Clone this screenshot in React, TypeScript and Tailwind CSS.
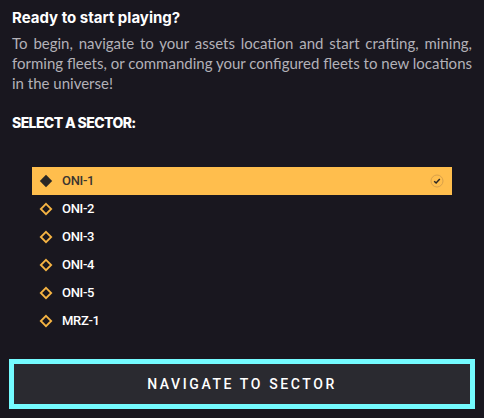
import React from 'react'

const sectors = ['ONI-1', 'ONI-2', 'ONI-3', 'ONI-4', 'ONI-5', 'MRZ-1']

const Diamond = ({ filled }: { filled: boolean }) => (
  <svg width="14" height="14" viewBox="0 0 14 14" className="shrink-0">
    {filled ? (
      <path d="M7 0.8 L13.2 7 L7 13.2 L0.8 7 Z" fill="#2a2725" />
    ) : (
      <path d="M7 1.8 L12.2 7 L7 12.2 L1.8 7 Z" fill="none" stroke="#f6b443" strokeWidth="1.8" />
    )}
  </svg>
)

const App = () => {
  const selected = 0
  return (
    <div className="w-[484px] h-[418px] bg-[#19171f] overflow-hidden" style={{ fontFamily: 'Inter, "Noto Sans", sans-serif' }}>
      <div className="px-3 pt-[8px]">
        <h1 className="text-[15px] font-bold text-white leading-[20px]">Ready to start playing?</h1>
        <p className="mt-[5px] text-[15px] leading-[20px] text-[#b3b1b8] text-justify" style={{ fontFamily: 'Lato, sans-serif' }}>
          To begin, navigate to your assets location and start crafting, mining, forming fleets, or commanding your configured fleets to new locations in the universe!
        </p>
        <h2 className="mt-[20px] text-[14px] font-extrabold text-white tracking-[-0.6px] leading-[20px]">SELECT A SECTOR:</h2>
      </div>

      <div className="mt-[34px] ml-[32px] w-[420px] flex flex-col">
        {sectors.map((s, i) => {
          const active = i === selected
          return (
            <div
              key={s}
              className={`h-[28px] flex items-center pl-[7px] pr-[8px] ${active ? 'bg-[#ffbe4d]' : ''}`}
            >
              <Diamond filled={active} />
              <span className={`ml-[9px] text-[13px] font-medium tracking-[-0.3px] ${active ? 'text-[#3b3530]' : 'text-white'}`} style={{ fontFamily: 'Roboto, sans-serif' }}>{s}</span>
              {active && (
                <svg width="14" height="14" viewBox="0 0 14 14" className="ml-auto">
                  <circle cx="7" cy="7" r="6" fill="none" stroke="#d9a14a" strokeWidth="1" />
                  <path d="M4.2 7.2 L6.1 9 L9.8 5" fill="none" stroke="#2a2725" strokeWidth="1.5" />
                </svg>
              )}
            </div>
          )
        })}
      </div>

      <div className="mt-[24px] mx-[9px]">
        <button className="w-full h-[50px] border-[5px] border-[#74fbff] bg-[#2a2a30] text-white text-[14px] font-medium tracking-[2.6px]" style={{ fontFamily: 'Roboto, sans-serif' }}>
          NAVIGATE TO SECTOR
        </button>
      </div>
    </div>
  )
}

export default App
